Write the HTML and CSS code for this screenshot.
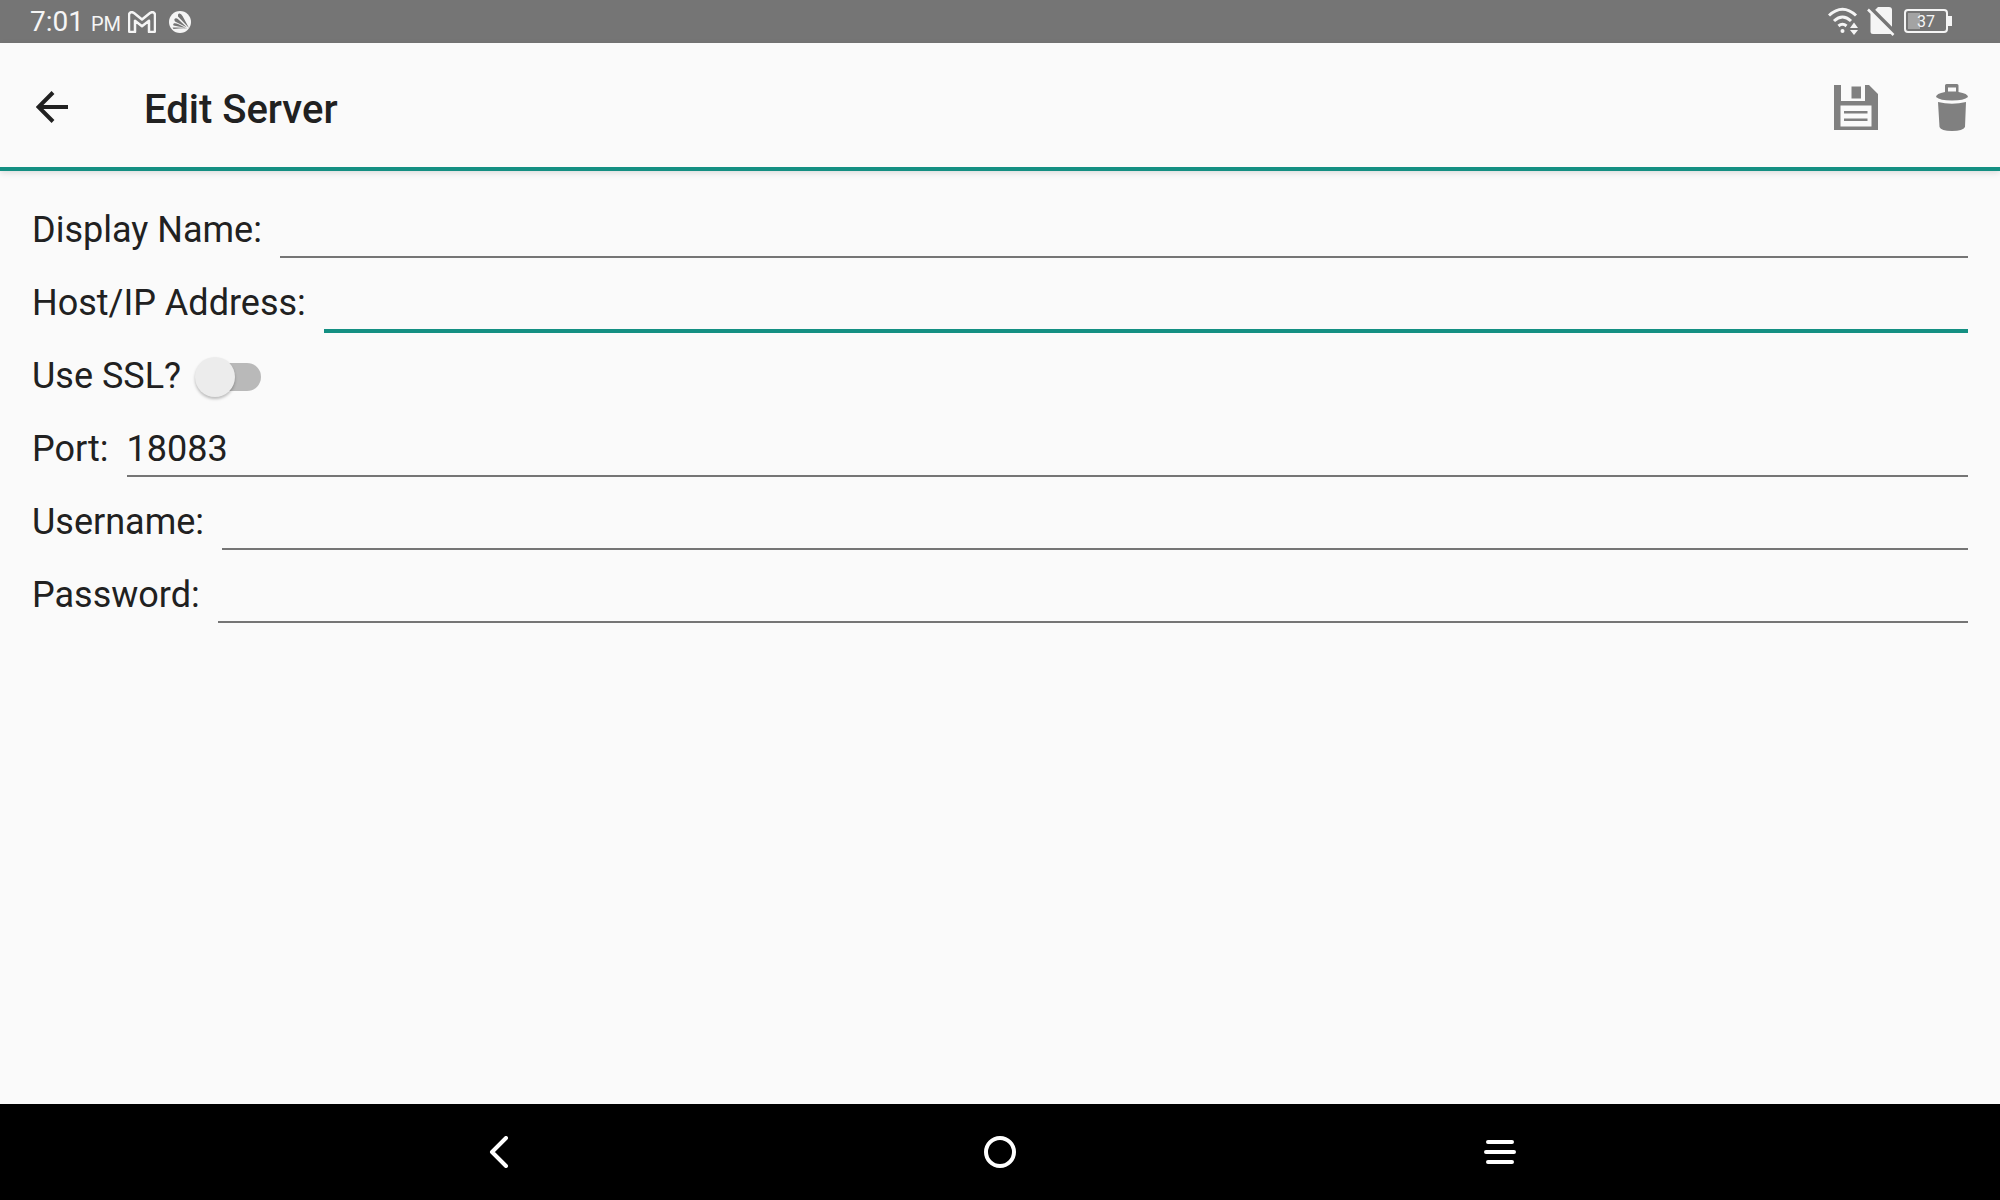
FILE: index.html
```html
<!DOCTYPE html>
<html lang="en">
<head>
<meta charset="utf-8">
<meta name="viewport" content="width=device-width, initial-scale=1">
<title>Edit Server</title>
<link rel="stylesheet" href="styles.css">
</head>
<body>
<div class="status-bar">
  <div class="status-left">
    <span class="clock">7:01 <span class="meridiem">PM</span></span>
    <svg class="icon-mail" width="28" height="22" viewBox="0 0 28 22" fill="none" stroke="#f5f5f5" stroke-width="2.500" stroke-linejoin="round"><path d="M3 1.300 Q4.500 .8 6 2 L14 8.500 L22 2 Q23.500 .8 25 1.300 Q27 2 27 4 V19.500 Q27 21 25.500 21 H21 V9.800 L14 15.200 L7 9.800 V21 H2.500 Q1 21 1 19.500 V4 Q1 2 3 1.300Z"/></svg>
    <svg class="icon-badge" width="22" height="22" viewBox="0 0 22 22"><circle cx="11" cy="11" r="11" fill="#f5f5f5"/><g fill="#757575"><path d="M20 17 L9 5.500 Q8.500 3 10 2.500 Q12 2 13.500 5Z"/><path d="M18 16.500 L6 10.500 Q4.500 8.500 6 7.500 Q8 6.500 10 9Z"/><path d="M17 17 L4.500 14.500 Q3.500 13 5 12.300 Q7 12 9 13Z"/><path d="M3.500 16.500 Q11 16 20 17.500 Q12 17 4.500 18Z"/></g></svg>
  </div>
  <div class="status-right">
    <svg width="30" height="28" viewBox="0 0 30 28" fill="none" stroke="#f5f5f5" stroke-width="3"><path d="M1 8.500 Q14.500 -4 28 8.500"/><path d="M6 14 Q14.500 6 23 14"/><path d="M10.500 19 Q14.500 15.500 18.500 19"/><g fill="#f5f5f5" stroke="none"><circle cx="14.500" cy="24" r="2"/><path d="M26 15.500 L30 21 H22Z M22 23 H30 L26 28Z"/></g></svg>
    <svg width="28" height="30" viewBox="0 0 28 30"><path fill="#f5f5f5" d="M11 1 H22 Q25 1 25 4 V28 H6 Q3.500 28 3.500 25.500 V8.500Z"/><path d="M3 1.500 L29 27.500" stroke="#757575" stroke-width="4"/><path d="M1 3.500 L26.500 29" stroke="#f5f5f5" stroke-width="2.500"/></svg>
    <span class="battery"><span class="battery-level">37</span></span>
  </div>
</div>
<header class="toolbar">
  <button class="icon-button" type="button" aria-label="Back">
    <svg width="32" height="32" viewBox="0 0 32 32" fill="none" stroke="#212121" stroke-width="4"><path d="M32 16 H3 M17 1.500 L2.500 16 L17 30.500"/></svg>
  </button>
  <h1 class="title">Edit Server</h1>
  <div class="actions">
    <button class="icon-button" type="button" aria-label="Save">
      <svg width="44" height="46" viewBox="0 0 44 46" fill="#808080"><path fill-rule="evenodd" d="M0 1 H7 V17 H31 V1 H35 L44 10 V46 H0Z M6.500 21.500 V42.500 H37.500 V21.500Z"/><path d="M17.500 2.500 H27 V14.500 H17.500Z M10 27 H33.500 V29.500 H10Z M10 34.500 H33.500 V37 H10Z"/></svg>
    </button>
    <button class="icon-button" type="button" aria-label="Delete">
      <svg width="32" height="48" viewBox="0 0 32 48" fill="#808080"><path fill-rule="evenodd" d="M9 9 V2.500 Q9 1 10.500 1 H21 Q22.500 1 22.500 2.500 V9 Q32 10.500 32 14 Q28 17.500 16 17.500 Q4 17.500 0 14 Q0 10.500 9 9Z M12 4.500 V8.500 H20 V4.500Z"/><path d="M2 19 Q16 22.500 30 19 L29 44 Q27 48 16 48 Q5 48 3.500 44Z"/></svg>
    </button>
  </div>
</header>
<main class="content">
  <form class="form">
    <div class="row"><label for="name">Display Name:</label><input class="field" id="name" type="text"></div>
    <div class="row"><label for="host">Host/IP Address:</label><input class="field field-active" id="host" type="text"></div>
    <div class="row row-switch"><label for="ssl">Use SSL?</label><input class="switch" id="ssl" type="checkbox"></div>
    <div class="row"><label for="port">Port:</label><input class="field" id="port" type="text" inputmode="numeric" value="18083"></div>
    <div class="row"><label for="user">Username:</label><input class="field" id="user" type="text"></div>
    <div class="row"><label for="pass">Password:</label><input class="field" id="pass" type="password"></div>
  </form>
</main>
<nav class="nav-bar" aria-label="System">
  <button class="icon-button" type="button" aria-label="Back"><svg width="32" height="32" viewBox="0 0 32 32" fill="none" stroke="#fff" stroke-width="4" stroke-linecap="round" stroke-linejoin="round"><path d="M22 2 L8 16 L22 30"/></svg></button>
  <button class="icon-button" type="button" aria-label="Home"><svg width="32" height="32" viewBox="0 0 32 32" fill="none" stroke="#fff" stroke-width="4"><circle cx="16" cy="16" r="14"/></svg></button>
  <button class="icon-button" type="button" aria-label="Recent apps"><svg width="32" height="32" viewBox="0 0 32 32" fill="none" stroke="#fff" stroke-width="4" stroke-linecap="round"><path d="M4 6 H28 M2 16 H30 M4 26 H28"/></svg></button>
</nav>
</body>
</html>
```
FILE: styles.css
```css
* { box-sizing: border-box; }

body {
  margin: 0;
  min-height: 100vh;
  display: flex;
  flex-direction: column;
  background: #fafafa;
  color: #212121;
  font-family: Roboto, "Liberation Sans", sans-serif;
}

svg { display: block; flex: none; }

.status-bar {
  display: flex;
  justify-content: space-between;
  height: 43px;
  padding: 0 48px 0 30px;
  background: #757575;
  color: #f5f5f5;
}

.status-left,
.status-right {
  display: flex;
  align-items: center;
}

.clock { padding-top: 2px; font-size: 28px; line-height: 43px; }
.meridiem { font-size: 20px; }
.icon-mail { margin-left: 7px; }
.icon-badge { margin-left: 13px; }

.status-right {
  gap: 9px;
  padding-bottom: 2px;
}

.battery {
  display: flex;
  align-items: center;
}

.battery::after {
  content: "";
  width: 4px;
  height: 10px;
  background: #f5f5f5;
}

.battery-level {
  width: 44px;
  height: 24px;
  border: 2px solid #f5f5f5;
  border-radius: 4px;
  background: linear-gradient(#a3a3a3, #a3a3a3) 2px 2px / 12px 16px no-repeat;
  font-size: 16px;
  line-height: 21px;
  text-align: center;
}

.toolbar {
  display: flex;
  align-items: center;
  height: 128px;
  padding: 3px 32px 0 36px;
  border-bottom: 4px solid #148f82;
  box-shadow: 0 2px 6px rgba(0, 0, 0, 0.12);
}

.icon-button {
  display: flex;
  align-items: center;
  justify-content: center;
  padding: 0;
  border: 0;
  background: none;
}

.title {
  margin: 0 0 0 76px;
  padding-top: 6px;
  font-size: 40px;
  font-weight: 500;
  line-height: 48px;
}

.actions {
  display: flex;
  gap: 58px;
  margin-left: auto;
}

.content {
  flex: 1;
  padding: 30px 32px;
}

.row {
  display: flex;
  align-items: flex-start;
  gap: 18px;
  height: 73px;
  padding-top: 8px;
  font-size: 36px;
  line-height: 42px;
}

.row-switch { gap: 14px; }

.field {
  flex: 1;
  min-width: 0;
  padding: 0 0 5px;
  border: 0;
  border-bottom: 2px solid #757575;
  border-radius: 0;
  outline: 0;
  background: none;
  color: inherit;
  font: inherit;
}

.field-active,
.field:focus { border-bottom: 4px solid #148f82; }

.switch {
  appearance: none;
  display: flex;
  align-items: center;
  position: relative;
  width: 66px;
  height: 40px;
  margin: 2px 0 0;
}

.switch::before {
  content: "";
  position: absolute;
  inset: 6px 0 6px 6px;
  border-radius: 14px;
  background: #b9b9b9;
}

.switch::after {
  content: "";
  position: relative;
  width: 40px;
  height: 40px;
  border-radius: 50%;
  background: #ececec;
  box-shadow: 0 2px 3px rgba(0, 0, 0, 0.25);
}

.switch:checked { justify-content: flex-end; }

.nav-bar {
  display: grid;
  grid-template-columns: repeat(3, 25%);
  justify-content: center;
  height: 96px;
  background: #000;
}
```
